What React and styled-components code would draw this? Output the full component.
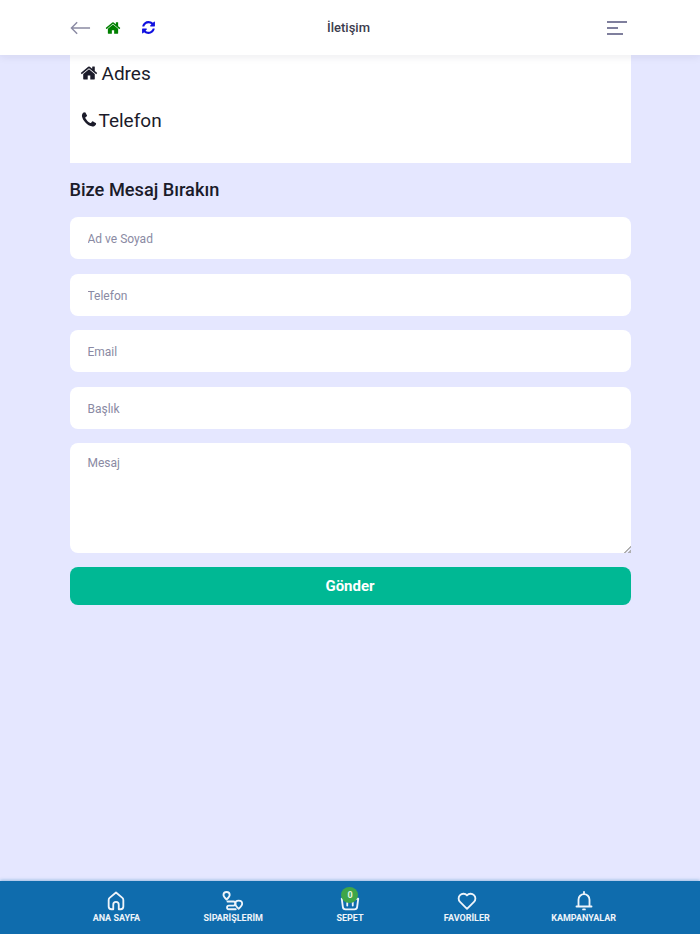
import React from "react";
import styled, { createGlobalStyle } from "styled-components";

const Global = createGlobalStyle`
  html, body { margin: 0; padding: 0; background: #e5e7ff; }
  * { box-sizing: border-box; }
  body { font-family: Roboto, "Liberation Sans", sans-serif; }
`;

const Page = styled.div`
  width: 700px;
  height: 934px;
  display: flex;
  flex-direction: column;
  background: #e5e7ff;
  overflow: hidden;
`;

const Header = styled.header`
  height: 55px;
  flex: none;
  background: #fff;
  box-shadow: 0 2px 8px rgba(30, 30, 60, 0.08);
  padding: 0 73px 0 70px;
  display: grid;
  grid-template-columns: 1fr auto 1fr;
  align-items: center;
  position: relative;
  z-index: 1;
`;

const HeaderLeft = styled.div`
  display: flex;
  align-items: center;
`;

const FaIcon = styled.svg.attrs({ viewBox: "0 0 1792 1792" })`
  display: block;
  flex: none;
  width: ${(p) => p.$size}px;
  height: ${(p) => p.$size}px;
  fill: ${(p) => p.$color || "currentColor"};
  margin-left: ${(p) => p.$gap || 0}px;
`;

const HeaderTitle = styled.div`
  font-size: 13px;
  font-weight: 500;
  color: #3b3b4d;
  line-height: 54px;
`;

const MenuButton = styled.div`
  justify-self: end;
  display: flex;
  flex-direction: column;
  gap: 4px;
  width: 20px;
`;

const MenuLine = styled.span`
  display: block;
  height: 2px;
  width: ${(p) => p.$w}px;
  background: #7f7f9d;
`;

const Main = styled.main`
  flex: 1;
  width: 561px;
  margin: 0 auto;
`;

const InfoCard = styled.section`
  height: 108px;
  background: #fff;
  padding: 6px 10px 0;
  display: flex;
  flex-direction: column;
  gap: 23px;
`;

const InfoRow = styled.div`
  display: flex;
  align-items: center;
  height: 24px;
  font-size: 19px;
  font-weight: 400;
  color: #1b1b2a;
  gap: ${(p) => p.$gap}px;
`;

const Heading = styled.h2`
  margin: 15px 0 15.35px;
  height: 24px;
  font-size: 18.2px;
  line-height: 24px;
  font-weight: 500;
  color: #1b1b2a;
`;

const Form = styled.form`
  display: flex;
  flex-direction: column;
  gap: 14.4px;
`;

const Input = styled.input`
  width: 100%;
  height: 42px;
  border: 0;
  outline: 0;
  border-radius: 8px;
  background: #fff;
  padding: 2px 18px 0;
  font: 400 12px Roboto, sans-serif;
  color: #3b3b4d;
  &::placeholder { color: #8a8aa3; opacity: 1; }
`;

const TextArea = styled.textarea`
  display: block;
  width: 100%;
  height: 110px;
  border: 0;
  outline: 0;
  border-radius: 8px;
  background: #fff;
  padding: 13px 18px;
  font: 400 12px Roboto, sans-serif;
  &::placeholder { color: #8a8aa3; opacity: 1; }
  &::-webkit-resizer {
    background: linear-gradient(
      135deg,
      transparent 76%,
      #b0b0b0 76%,
      #b0b0b0 82%,
      transparent 82%,
      transparent 88%,
      #b0b0b0 88%
    );
  }
`;

const Submit = styled.button`
  height: 38px;
  border: 0;
  border-radius: 8px;
  background: #00b894;
  color: #fff;
  font: 700 15px Roboto, sans-serif;
`;

const Footer = styled.footer`
  height: 53px;
  flex: none;
  background: #0f6cad;
  box-shadow: 0 -1px 3px rgba(15, 108, 173, 0.35);
  padding: 0 58px;
  display: grid;
  grid-template-columns: repeat(5, 1fr);
`;

const NavItem = styled.div`
  display: flex;
  flex-direction: column;
  align-items: center;
  padding-top: 9px;
  color: #eef4fa;
`;

const NavIcon = styled.div`
  position: relative;
  height: 22px;
  display: flex;
  align-items: center;
  justify-content: center;
`;

const NavLabel = styled.span`
  font-size: 9px;
  line-height: 13px;
  font-weight: 700;
  white-space: nowrap;
`;

const Badge = styled.span`
  position: absolute;
  top: -3px;
  left: 50%;
  width: 17px;
  height: 16px;
  margin-left: -8.5px;
  border-radius: 50%;
  background: #3fa648;
  color: #e6f5e6;
  font-size: 9px;
  font-weight: 700;
  line-height: 16px;
  text-align: center;
`;

const Glyph = styled.svg.attrs({ viewBox: "0 0 24 24", fill: "none" })`
  width: 22px;
  height: 22px;
  stroke: currentColor;
  stroke-width: 2;
  stroke-linecap: round;
  stroke-linejoin: round;
`;

const BackArrow = styled.svg.attrs({ viewBox: "0 0 22 14", fill: "none" })`
  width: 21px;
  height: 14px;
  stroke: #8a8aa3;
  stroke-width: 1.5;
`;

const HOME =
  "M1472 992v480q0 26-19 45t-45 19h-384v-384h-256v384h-384q-26 0-45-19t-19-45v-480q0-1 .5-3t.5-3l575-474 575 474q1 2 1 6zm223-69l-62 74q-8 9-21 11h-3q-13 0-21-7l-692-577-692 577q-12 8-24 7-13-2-21-11l-62-74q-8-10-7-23.5t11-21.5l719-599q32-26 76-26t76 26l244 204v-195q0-14 9-23t23-9h192q14 0 23 9t9 23v408l219 182q10 8 11 21.5t-7 23.5z";
const REFRESH =
  "M1639 1056q0 5-1 7-64 268-268 434.5t-478 166.5q-146 0-282.5-55t-243.5-157l-129 129q-19 19-45 19t-45-19-19-45v-448q0-26 19-45t45-19h448q26 0 45 19t19 45-19 45l-137 137q71 66 161 102t187 36q134 0 250-65t186-179q11-17 53-117 8-23 30-23h192q13 0 22.5 9.5t9.5 22.5zm25-800v448q0 26-19 45t-45 19h-448q-26 0-45-19t-19-45 19-45l138-138q-148-137-349-137-134 0-250 65t-186 179q-11 17-53 117-8 23-30 23h-199q-13 0-22.5-9.5t-9.5-22.5v-7q65-268 270-434.5t480-166.5q146 0 284 55.5t245 156.5l130-129q19-19 45-19t45 19 19 45z";
const PHONE =
  "M1600 1240q0 27-10 70.5t-21 68.5q-21 50-122 106-94 51-186 51-27 0-53-3.5t-57.5-12.5-47-14.5-55.5-20.5-49-18q-98-35-175-83-127-79-264-216t-216-264q-48-77-83-175-3-9-18-49t-20.5-55.5-14.5-47-12.5-57.5-3.5-53q0-92 51-186 56-101 106-122 25-11 68.5-21t70.5-10q14 0 21 3 18 6 53 76 11 19 30 54t35 63.5 31 53.5q3 4 17.5 25t21.5 35.5 7 28.5q0 20-28.5 50t-62 55-62 53-28.5 46q0 9 5 22.5t8.5 20.5 14 24 11.5 19q76 137 174 235t235 174q2 1 19 11.5t24 14 20.5 8.5 22.5 5q18 0 46-28.5t53-62 55-62 50-28.5q14 0 28.5 7t35.5 21.5 25 17.5q25 15 53.5 31t63.5 35 54 30q70 35 76 53 3 7 3 21z";

const icons = {
  home: <path d="M12 2.8 5 8.6A3 3 0 0 0 4 11v7a3 3 0 0 0 3 3h2v-5a3 3 0 0 1 6 0v5h2a3 3 0 0 0 3-3v-7a3 3 0 0 0-1-2.4Z" />,
  route: (
    <>
      <path d="M5 2.2c2 0 3.4 1.4 3.4 3.2 0 1.7-1.7 3.4-3.4 5-1.7-1.6-3.4-3.3-3.4-5 0-1.8 1.4-3.2 3.4-3.2Z" />
      <path d="M6 12.5h6.5a2.2 2.2 0 0 1 0 4.5H7.5a2 2 0 0 0 0 4H15" />
      <path d="M18.2 11.5c2.3 0 3.8 1.7 3.8 3.6 0 2-2 3.8-3.8 5.4-1.8-1.6-3.8-3.4-3.8-5.4 0-1.9 1.5-3.6 3.8-3.6Z" />
    </>
  ),
  basket: <path d="M3 9.5h18l-1.2 9a3 3 0 0 1-3 2.7H7.2a3 3 0 0 1-3-2.7ZM9 13.5V17M15 13.5V17" />,
  heart: <path d="M12 20.5 4.4 13a5.2 5.2 0 0 1 0-7.4 5.2 5.2 0 0 1 7.6.3 5.2 5.2 0 0 1 7.6-.3 5.2 5.2 0 0 1 0 7.4Z" />,
  bell: <path d="M12 2v1.6M6 17.5v-7a6 6 0 0 1 12 0v7M3.8 18h16.4M11 21.2h2" />,
};

const nav = [
  ["home", "ANA SAYFA"],
  ["route", "SİPARİŞLERİM"],
  ["basket", "SEPET", 0],
  ["heart", "FAVORİLER"],
  ["bell", "KAMPANYALAR"],
];

export default function App() {
  return (
    <Page>
      <Global />
      <Header>
        <HeaderLeft>
          <BackArrow>
            <path d="M21 7H1.5M7.5 1 1.5 7l6 6" />
          </BackArrow>
          <FaIcon $size={16} $color="#008000" $gap={14}><path d={HOME} /></FaIcon>
          <FaIcon $size={15} $color="#1010e0" $gap={20}><path d={REFRESH} /></FaIcon>
        </HeaderLeft>
        <HeaderTitle>İletişim</HeaderTitle>
        <MenuButton>
          <MenuLine $w={20} />
          <MenuLine $w={11} />
          <MenuLine $w={16} />
        </MenuButton>
      </Header>
      <Main>
        <InfoCard>
          <InfoRow $gap={4}><FaIcon $size={18}><path d={HOME} /></FaIcon>Adres</InfoRow>
          <InfoRow $gap={1}><FaIcon $size={18}><path d={PHONE} /></FaIcon>Telefon</InfoRow>
        </InfoCard>
        <Heading>Bize Mesaj Bırakın</Heading>
        <Form onSubmit={(e) => e.preventDefault()}>
          <Input placeholder="Ad ve Soyad" />
          <Input placeholder="Telefon" />
          <Input placeholder="Email" />
          <Input placeholder="Başlık" />
          <TextArea placeholder="Mesaj" />
          <Submit type="submit">Gönder</Submit>
        </Form>
      </Main>
      <Footer>
        {nav.map(([icon, label, badge]) => (
          <NavItem key={label}>
            <NavIcon>
              <Glyph>{icons[icon]}</Glyph>
              {badge !== undefined && <Badge>{badge}</Badge>}
            </NavIcon>
            <NavLabel>{label}</NavLabel>
          </NavItem>
        ))}
      </Footer>
    </Page>
  );
}
